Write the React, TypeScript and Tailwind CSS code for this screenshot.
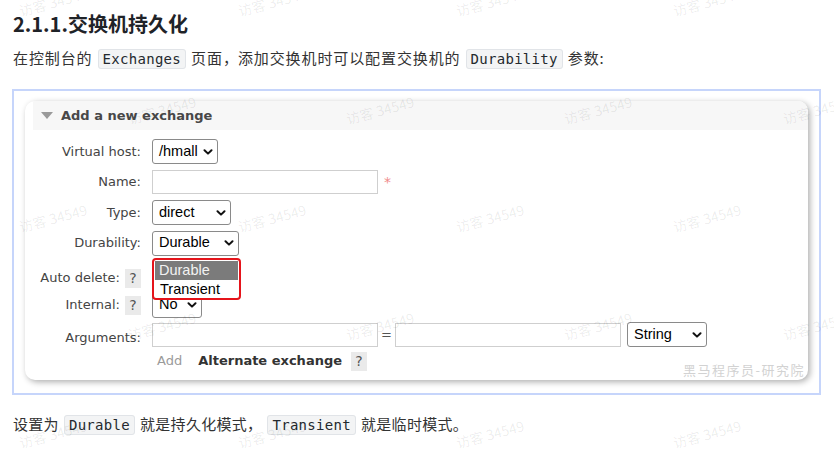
import React from "react";

const marks = [
  { x: 18, y: -8 }, { x: 237, y: -8 }, { x: 455, y: -8 }, { x: 672, y: -8 },
  { x: 127, y: 100 }, { x: 345, y: 100 }, { x: 563, y: 100 }, { x: 782, y: 100 },
  { x: 18, y: 208 }, { x: 237, y: 208 }, { x: 455, y: 208 }, { x: 672, y: 208 },
  { x: 127, y: 316 }, { x: 345, y: 316 }, { x: 563, y: 316 }, { x: 782, y: 316 },
  { x: 18, y: 424 }, { x: 237, y: 424 }, { x: 455, y: 424 }, { x: 672, y: 424 },
];

const Code = ({ children }: { children: React.ReactNode }) => (
  <code className="mx-[5px] px-[4px] py-[1px] rounded-[3px] border border-[#e1e4e8] bg-[#f3f4f5] font-['DejaVu_Sans_Mono',monospace] text-[14px] text-[#24292e] tracking-[0.3px]">
    {children}
  </code>
);

const Chevron = () => (
  <svg width="10" height="6" viewBox="0 0 10 6" className="shrink-0">
    <polyline points="1.5,1.2 5,4.6 8.5,1.2" fill="none" stroke="#111" strokeWidth="2" strokeLinecap="round" strokeLinejoin="round" />
  </svg>
);

const Select = ({ value, w }: { value: string; w: string }) => (
  <div className={`${w} h-[25px] flex items-center justify-between pl-[6px] pr-[4px] border border-[#8a8a8a] rounded-[3px] bg-white font-['Liberation_Sans',Arial,sans-serif] text-[14.5px] text-black`}>
    <span>{value}</span>
    <Chevron />
  </div>
);

const Help = () => (
  <span className="w-[16px] h-[19px] flex items-center justify-center bg-[#eaeaea] text-[#555] text-[14px]">?</span>
);

const Input = () => <div className="w-[226px] h-[24px] border border-[#cfcfcf] bg-white" />;

const Row = ({
  label,
  help,
  className,
  children,
}: {
  label: string;
  help?: boolean;
  className: string;
  children: React.ReactNode;
}) => (
  <div className={`flex items-center ${className}`}>
    <div className="w-[108px] flex justify-end items-center gap-[5px] text-[13px] text-[#444]">
      <span>{label}</span>
      {help && <Help />}
    </div>
    <div className="ml-[11px] relative flex items-center">{children}</div>
  </div>
);

export default function App() {
  return (
    <div className="relative w-[834px] h-[455px] bg-white overflow-hidden font-['Noto_Sans_CJK_SC',sans-serif] text-[#333]">
      <div className="pl-[13px]">
        <h3 className="pt-[10px] text-[20px] leading-[28px] font-bold text-[#1f2328]">2.1.1.交换机持久化</h3>
        <p className="mt-[7px] text-[15px] leading-[26px] tracking-[0.9px]">
          在控制台的<Code>Exchanges</Code>页面<span className="inline-block w-[15px]">，</span>添加交换机时可以配置交换机的<Code>Durability</Code>参数:
        </p>

        {/* screenshot frame */}
        <div className="ml-[-1px] mt-[17px] w-[809px] h-[306px] border-2 border-[#c6d5fb] pt-[10px] pl-[11px]">
          <div className="relative w-[783px] h-[279px] rounded-[10px] bg-white overflow-hidden shadow-[2px_2px_6px_rgba(0,0,0,0.32)] pl-2 font-['DejaVu_Sans',Verdana,sans-serif]">
            <div className="h-[29px] bg-[#f7f7f7] flex items-center pl-[8px] gap-[8px]">
              <svg width="12" height="7" viewBox="0 0 12 7">
                <polygon points="0,0 12,0 6,7" fill="#9a9a9a" />
              </svg>
              <span className="text-[13px] font-bold text-[#484848]">Add a new exchange</span>
            </div>

            <Row label="Virtual host:" className="mt-[9px] h-[25px]">
              <Select value="/hmall" w="w-[66px]" />
            </Row>
            <Row label="Name:" className="mt-[6px] h-[24px]">
              <Input />
              <span className="ml-[6px] text-[14px] text-[#f08a8a]">*</span>
            </Row>
            <Row label="Type:" className="mt-[6px] h-[25px]">
              <Select value="direct" w="w-[79px]" />
            </Row>
            <Row label="Durability:" className="mt-[6px] h-[24px] relative z-10">
              <Select value="Durable" w="w-[87px]" />
              <div className="absolute left-0 top-[27px] w-[89px] h-[42px] border-2 border-[#e5141b] rounded-[4px] bg-white p-[1px] font-['Liberation_Sans',Arial,sans-serif] text-[14.5px] leading-[18px]">
                <div className="h-[19px] bg-[#7b7b7b] text-[#f2f2f2] pl-[4px]">Durable</div>
                <div className="h-[18px] text-black pl-[5px]">Transient</div>
              </div>
            </Row>
            <Row label="Auto delete:" help className="mt-[11px] h-[24px]">
              <Select value="No" w="w-[50px]" />
            </Row>
            <Row label="Internal:" help className="mt-[3px] h-[24px]">
              <Select value="No" w="w-[50px]" />
            </Row>
            <Row label="Arguments:" className="mt-[5px] h-[25px] items-end">
              <Input />
              <span className="w-[17px] text-center text-[13px] text-[#555]">=</span>
              <Input />
              <div className="ml-[6px]">
                <Select value="String" w="w-[80px]" />
              </div>
            </Row>
            <div className="mt-[4px] h-[20px] flex items-center pl-[124px] text-[13px]">
              <span className="text-[#9a9a9a]">Add</span>
              <span className="ml-[16px] font-bold text-[#333]">Alternate exchange</span>
              <span className="ml-[9px]">
                <Help />
              </span>
            </div>

            <span className="absolute right-[3px] bottom-[1px] text-[13px] tracking-[1.5px] text-[#d2d2d2] font-['Noto_Sans_CJK_SC',sans-serif]">
              黑马程序员-研究院
            </span>
          </div>
        </div>

        <p className="mt-[16px] text-[15px] leading-[26px] tracking-[0.3px]">
          设置为<Code>Durable</Code>就是持久化模式，<Code>Transient</Code>就是临时模式。
        </p>
      </div>

      {/* watermarks */}
      <div className="pointer-events-none absolute inset-0">
        {marks.map((m, i) => (
          <span
            key={i}
            className="absolute text-[14px] leading-[20px] whitespace-nowrap text-[rgba(0,0,0,0.08)] rotate-[-15deg]"
            style={{ left: m.x, top: m.y }}
          >
            访客 34549
          </span>
        ))}
      </div>
    </div>
  );
}
